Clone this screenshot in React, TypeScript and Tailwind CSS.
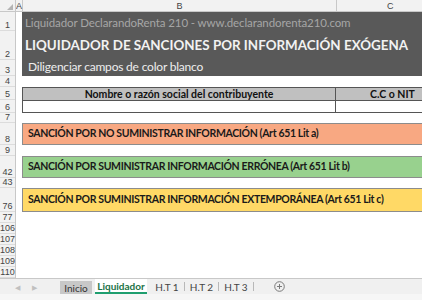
import React from "react";

const rows: { n: string; h: number }[] = [
  { n: "1", h: 19 },
  { n: "2", h: 29 },
  { n: "3", h: 16 },
  { n: "4", h: 11 },
  { n: "5", h: 13 },
  { n: "6", h: 13 },
  { n: "7", h: 10 },
  { n: "8", h: 22 },
  { n: "9", h: 11 },
  { n: "42", h: 22 },
  { n: "43", h: 10 },
  { n: "76", h: 24 },
  { n: "77", h: 11 },
  { n: "106", h: 11 },
  { n: "107", h: 11 },
  { n: "108", h: 11 },
  { n: "109", h: 11 },
  { n: "110", h: 11 },
];

function Bar({ color, text, h, mt }: { color: string; text: string; h: number; mt: number }) {
  return (
    <div
      className="ml-[6px] flex items-center whitespace-nowrap border border-r-0 border-[#8c8c8c] pl-[5px] text-[10.5px] font-bold tracking-[-0.35px] text-[#1a1a1a]"
      style={{ backgroundColor: color, height: h, marginTop: mt }}
    >
      {text}
    </div>
  );
}

export default function App() {
  return (
    <div
      className="relative h-[300px] w-[422px] overflow-hidden bg-white"
      style={{ fontFamily: "Lato, 'Open Sans', sans-serif" }}
    >
      {/* column header */}
      <div className="flex h-[12px] border-b border-[#c8c8c8] bg-[#f2f2f2] text-[10px] leading-[12px] text-[#444]" style={{ fontFamily: "'Liberation Sans', sans-serif" }}>
        <div className="relative w-[16px] border-r border-[#c8c8c8]">
          <div className="absolute bottom-[1px] right-[2px] h-0 w-0 border-b-[6px] border-l-[6px] border-b-[#b4b4b4] border-l-transparent" />
        </div>
        <div className="w-[7px] border-r border-[#c8c8c8] text-center text-[9px]">A</div>
        <div className="w-[314px] border-r border-[#c8c8c8] text-center text-[9px]">B</div>
        <div className="flex-1 pl-[50px] text-[9px]">C</div>
      </div>

      <div className="flex">
        {/* row headers */}
        <div className="w-[16px] shrink-0 border-r border-[#c8c8c8] bg-[#f2f2f2]">
          {rows.map((r) => (
            <div
              key={r.n}
              className="flex items-end justify-center border-b border-[#dcdcdc] text-[9px] leading-[10px] text-[#444]"
              style={{ height: r.h, fontFamily: "'Liberation Sans', sans-serif" }}
            >
              {r.n}
            </div>
          ))}
        </div>

        {/* content */}
        <div className="flex-1">
          <div className="ml-[6px] flex h-[64px] flex-col whitespace-nowrap bg-[#595959]">
            <div className="h-[19px] pl-[3px] pt-[3px] text-[11.5px] leading-[15px] tracking-[-0.1px] text-[#a6a6a6]">
              Liquidador DeclarandoRenta 210 - www.declarandorenta210.com
            </div>
            <div className="h-[29px] pl-[3px] pt-[5px] text-[13.4px] font-bold leading-[18px] text-[#f2f2f2]">
              LIQUIDADOR DE SANCIONES POR INFORMACIÓN EXÓGENA
            </div>
            <div className="h-[16px] pl-[6px] text-[12px] leading-[14px] tracking-[-0.2px] text-[#eeeeee]">
              Diligenciar campos de color blanco
            </div>
          </div>

          <div className="ml-[6px] mt-[11px] border-l border-t border-[#555]">
            <div className="flex h-[13px] border-b border-[#555] bg-[#c0c0c0] text-[10.5px] font-bold leading-[12px] text-[#111]">
              <div className="w-[313px] border-r border-[#555] text-center">Nombre o razón social del contribuyente</div>
              <div className="flex-1 pl-[34px]">C.C o NIT</div>
            </div>
            <div className="flex h-[12px] border-b border-[#555] bg-white">
              <div className="w-[313px] border-r border-[#555]" />
              <div className="flex-1" />
            </div>
          </div>

          <Bar color="#f8a882" text="SANCIÓN POR NO SUMINISTRAR INFORMACIÓN (Art 651 Lit a)" h={22} mt={10} />
          <Bar color="#98d18e" text="SANCIÓN POR SUMINISTRAR INFORMACIÓN ERRÓNEA (Art 651 Lit b)" h={22} mt={11} />
          <Bar color="#ffd966" text="SANCIÓN POR SUMINISTRAR INFORMACIÓN EXTEMPORÁNEA (Art 651 Lit c)" h={24} mt={10} />
        </div>
      </div>

      {/* tab bar */}
      <div className="flex h-[16px] items-stretch border-t border-[#c8c8c8] bg-[#f0f0f0] text-[10px] leading-[14px] text-[#444]">
        <div className="flex w-[60px] items-center gap-[12px] pl-[15px] text-[7px] text-[#c0c0c0]">
          <span>◀</span>
          <span>▶</span>
        </div>
        <div className="mt-[2px] flex w-[32px] items-center justify-center bg-[#c8c8c8] text-[#333]">Inicio</div>
        <div className="mx-[3px] flex w-[52px] items-center justify-center border-b-2 border-[#1f9e6f] bg-white font-bold text-[#217346]">
          Liquidador
        </div>
        <div className="flex w-[34px] items-center justify-center">H.T 1</div>
        <div className="my-[3px] w-px bg-[#b8b8b8]" />
        <div className="flex w-[33px] items-center justify-center">H.T 2</div>
        <div className="my-[3px] w-px bg-[#b8b8b8]" />
        <div className="flex w-[34px] items-center justify-center">H.T 3</div>
        <div className="my-[3px] w-px bg-[#b8b8b8]" />
        <div className="flex w-[50px] items-center justify-center">
          <svg width="11" height="11" viewBox="0 0 11 11">
            <circle cx="5.5" cy="5.5" r="4.8" fill="none" stroke="#7a7a7a" strokeWidth="1" />
            <path d="M5.5 3v5M3 5.5h5" stroke="#7a7a7a" strokeWidth="1" />
          </svg>
        </div>
      </div>
      <div className="h-[6px] bg-[#f6f6f6]" />
    </div>
  );
}
